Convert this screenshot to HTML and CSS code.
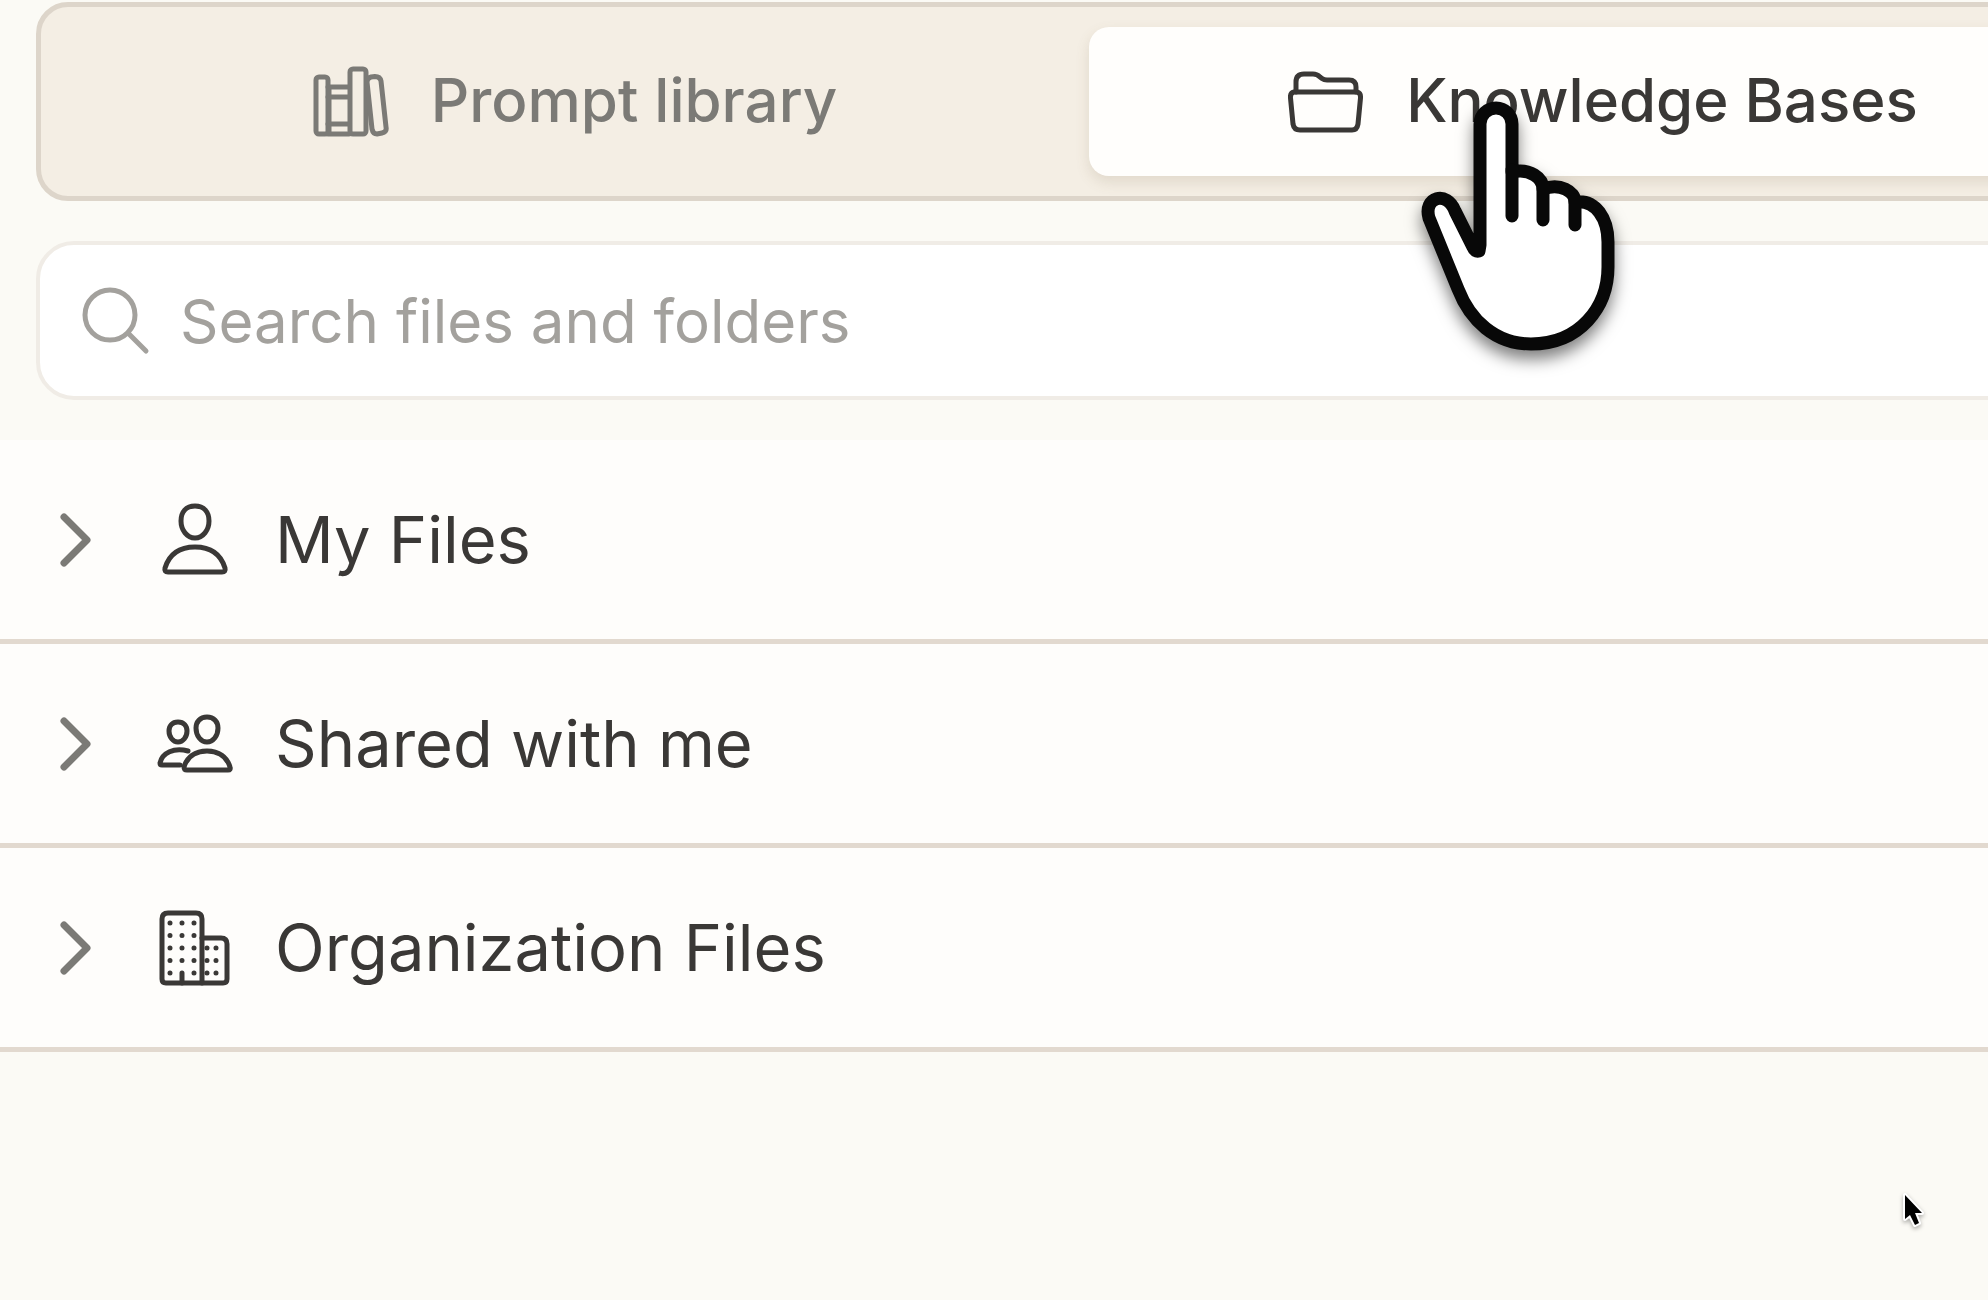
FILE: index.html
```html
<!DOCTYPE html>
<html lang="en">
<head>
<meta charset="utf-8">
<meta name="viewport" content="width=device-width, initial-scale=1">
<title>Knowledge Bases</title>
<link rel="stylesheet" href="styles.css">
</head>
<body>
<main class="panel">
  <header class="panel-head">
    <div class="tabs" role="tablist">
      <button class="tab" type="button" role="tab" aria-selected="false">
        <svg class="icon" viewBox="0 0 76 76" aria-hidden="true">
          <rect x="3" y="13" width="12" height="57" rx="3"/>
          <path d="M15 23h21M15 33h21M15 60h21M15 70h21M16 23v47"/>
          <rect x="37" y="5" width="16" height="65" rx="3"/>
          <path d="M54 18Q54 14 58 13L62 12.500Q67 12.500 68 17L73 63Q74 68 69 69L64 70Q60 70 59 65Z"/>
        </svg>
        <span class="tab-label">Prompt library</span>
      </button>
      <button class="tab tab-active" type="button" role="tab" aria-selected="true">
        <svg class="icon" viewBox="0 0 76 76" aria-hidden="true">
          <path d="M8 28V18Q8 10 16 10H25Q29 10 32 13L34 14.500Q36 16 39 16H61Q68 16 68 23V28"/>
          <path d="M6 28H69Q73 29 72.500 34L70 60Q69 66 64 66H12Q6 66 5 60L2.500 34Q2 29 6 28Z"/>
        </svg>
        <span class="tab-label">Knowledge Bases</span>
      </button>
    </div>
    <label class="search">
      <svg class="search-icon" viewBox="0 0 68 68" aria-hidden="true">
        <circle cx="28" cy="28" r="25"/>
        <path d="M46 46L64 64"/>
      </svg>
      <input class="search-input" type="search" placeholder="Search files and folders" aria-label="Search files and folders">
    </label>
  </header>
  <ul class="folders">
    <li>
      <button class="folder" type="button" aria-expanded="false">
        <svg class="chevron" viewBox="0 0 32 56" aria-hidden="true"><path d="M4 5L27 28L4 51"/></svg>
        <svg class="icon" viewBox="0 0 76 76" aria-hidden="true">
          <path d="M38 4C29 4 24 10 24 19C24 28 30 36 38 36C46 36 52 28 52 19C52 10 47 4 38 4Z"/>
          <path d="M38 45C22 45 12 53 8 66Q7 70 11 70H65Q69 70 68 66C64 53 54 45 38 45Z"/>
        </svg>
        <span>My Files</span>
      </button>
    </li>
    <li>
      <button class="folder" type="button" aria-expanded="false">
        <svg class="chevron" viewBox="0 0 32 56" aria-hidden="true"><path d="M4 5L27 28L4 51"/></svg>
        <svg class="icon" viewBox="0 0 76 76" aria-hidden="true">
          <path d="M21 16C15 16 12 20 12 25C12 31 16 36 21 36C26 36 30 31 30 25C30 20 27 16 21 16Z"/>
          <path d="M50 11C43 11 39 16 39 22C39 30 44 36 50 36C56 36 61 30 61 22C61 16 57 11 50 11Z"/>
          <path d="M31 45C17 41 5 47 3 57Q3 59 5 59H23"/>
          <path d="M50 45C38 45 30 51 27 61Q27 64 30 64H71Q74 64 73 61C70 51 62 45 50 45Z"/>
        </svg>
        <span>Shared with me</span>
      </button>
    </li>
    <li>
      <button class="folder" type="button" aria-expanded="false">
        <svg class="chevron" viewBox="0 0 32 56" aria-hidden="true"><path d="M4 5L27 28L4 51"/></svg>
        <svg class="icon" viewBox="0 0 76 76" aria-hidden="true">
          <path d="M45 73H9Q5 73 5 69V9Q5 3 11 3H39Q45 3 45 9Z"/>
          <path d="M45 28H64Q70 28 70 34V69Q70 73 66 73H45M25 63V73"/>
          <path class="windows" d="M13 13V64M25 13V54M37 13V64M50 38V64M59 38V64"/>
        </svg>
        <span>Organization Files</span>
      </button>
    </li>
  </ul>
</main>
<svg class="hand" viewBox="0 0 230 300" aria-hidden="true">
  <path d="M80 165V44a16 16 0 0 1 32 0V92C130 88 143 98 143 109C160 103 175 111 175 122C196 119 208 139 208 162V187C208 227 180 264 131 264C95 264 70 240 58 209L29 138C23 117 47 110 55 131L73 167Q75 172 79 171Z"/>
  <path d="M112 90V136M143 106V140M175 120V145"/>
</svg>
<svg class="pointer" viewBox="0 0 24 38" aria-hidden="true">
  <path d="M3 3V27L8 23L13 33L17 31L13 21H20Z"/>
</svg>
</body>
</html>
```
FILE: styles.css
```css
* {
  box-sizing: border-box;
}

body {
  margin: 0;
  min-height: 100vh;
  overflow-x: hidden;
  position: relative;
  background: #fbfaf5;
  color: #3a3836;
  font-family: Inter, "Liberation Sans", sans-serif;
}

button,
input {
  font: inherit;
  color: inherit;
}

svg {
  flex: none;
  fill: none;
  stroke: currentColor;
  stroke-linecap: round;
  stroke-linejoin: round;
}

/* The panel runs on past the right edge of the window. */
.panel {
  width: calc(100% + 190px);
}

.panel-head {
  display: flex;
  flex-direction: column;
  gap: 40px;
  padding: 2px 36px 40px;
}

.tabs {
  display: grid;
  grid-template-columns: 1fr 1fr;
  padding: 20px;
  border: 5px solid #ddd5ca;
  border-radius: 32px;
  background: #f4eee4;
}

.tab {
  display: flex;
  align-items: center;
  justify-content: center;
  gap: 42px;
  height: 149px;
  padding: 0;
  border: 0;
  border-radius: 20px;
  background: none;
  color: #7b7a76;
  font-size: 60px;
  font-weight: 500;
}

.tab-label {
  padding-bottom: 4px;
}

.tab-active {
  background: #fffefc;
  color: #3a3836;
  box-shadow: 0 6px 14px #78644628;
}

.icon {
  width: 76px;
  height: 76px;
  stroke-width: 5px;
}

.search {
  display: flex;
  align-items: center;
  gap: 30px;
  height: 159px;
  padding: 0 42px;
  border: 4px solid #f0ece6;
  border-radius: 38px;
  background: #fff;
  color: #a3a19d;
}

.search-icon {
  width: 68px;
  height: 68px;
  stroke-width: 5px;
}

.search-input {
  flex: 1;
  min-width: 0;
  padding: 0;
  border: 0;
  outline: 0;
  background: none;
  font-size: 60px;
}

.search-input::placeholder {
  color: #a3a19d;
  opacity: 1;
}

.folders {
  margin: 0;
  padding: 0;
  list-style: none;
}

.folder {
  display: flex;
  align-items: center;
  width: 100%;
  height: 204px;
  padding: 0 60px;
  border: 0;
  border-bottom: 5px solid #e2d9cf;
  background: #fefdfb;
  font-size: 65px;
  text-align: left;
}

.folder .icon {
  margin: 0 42px 0 65px;
}

.chevron {
  width: 32px;
  height: 56px;
  color: #7b7a76;
  stroke-width: 7px;
}

.windows {
  stroke-dasharray: 0 12.500;
}

.hand {
  position: absolute;
  top: 80px;
  left: 1400px;
  width: 230px;
  height: 300px;
  fill: #fff;
  stroke: #080808;
  stroke-width: 13px;
  filter: drop-shadow(0 9px 8px #00000080);
}

.pointer {
  position: absolute;
  top: 1192px;
  left: 1902px;
  width: 24px;
  height: 38px;
  fill: #000;
  stroke: #fff;
  stroke-width: 4px;
  paint-order: stroke;
  filter: drop-shadow(0 2px 2px #00000050);
}
```
